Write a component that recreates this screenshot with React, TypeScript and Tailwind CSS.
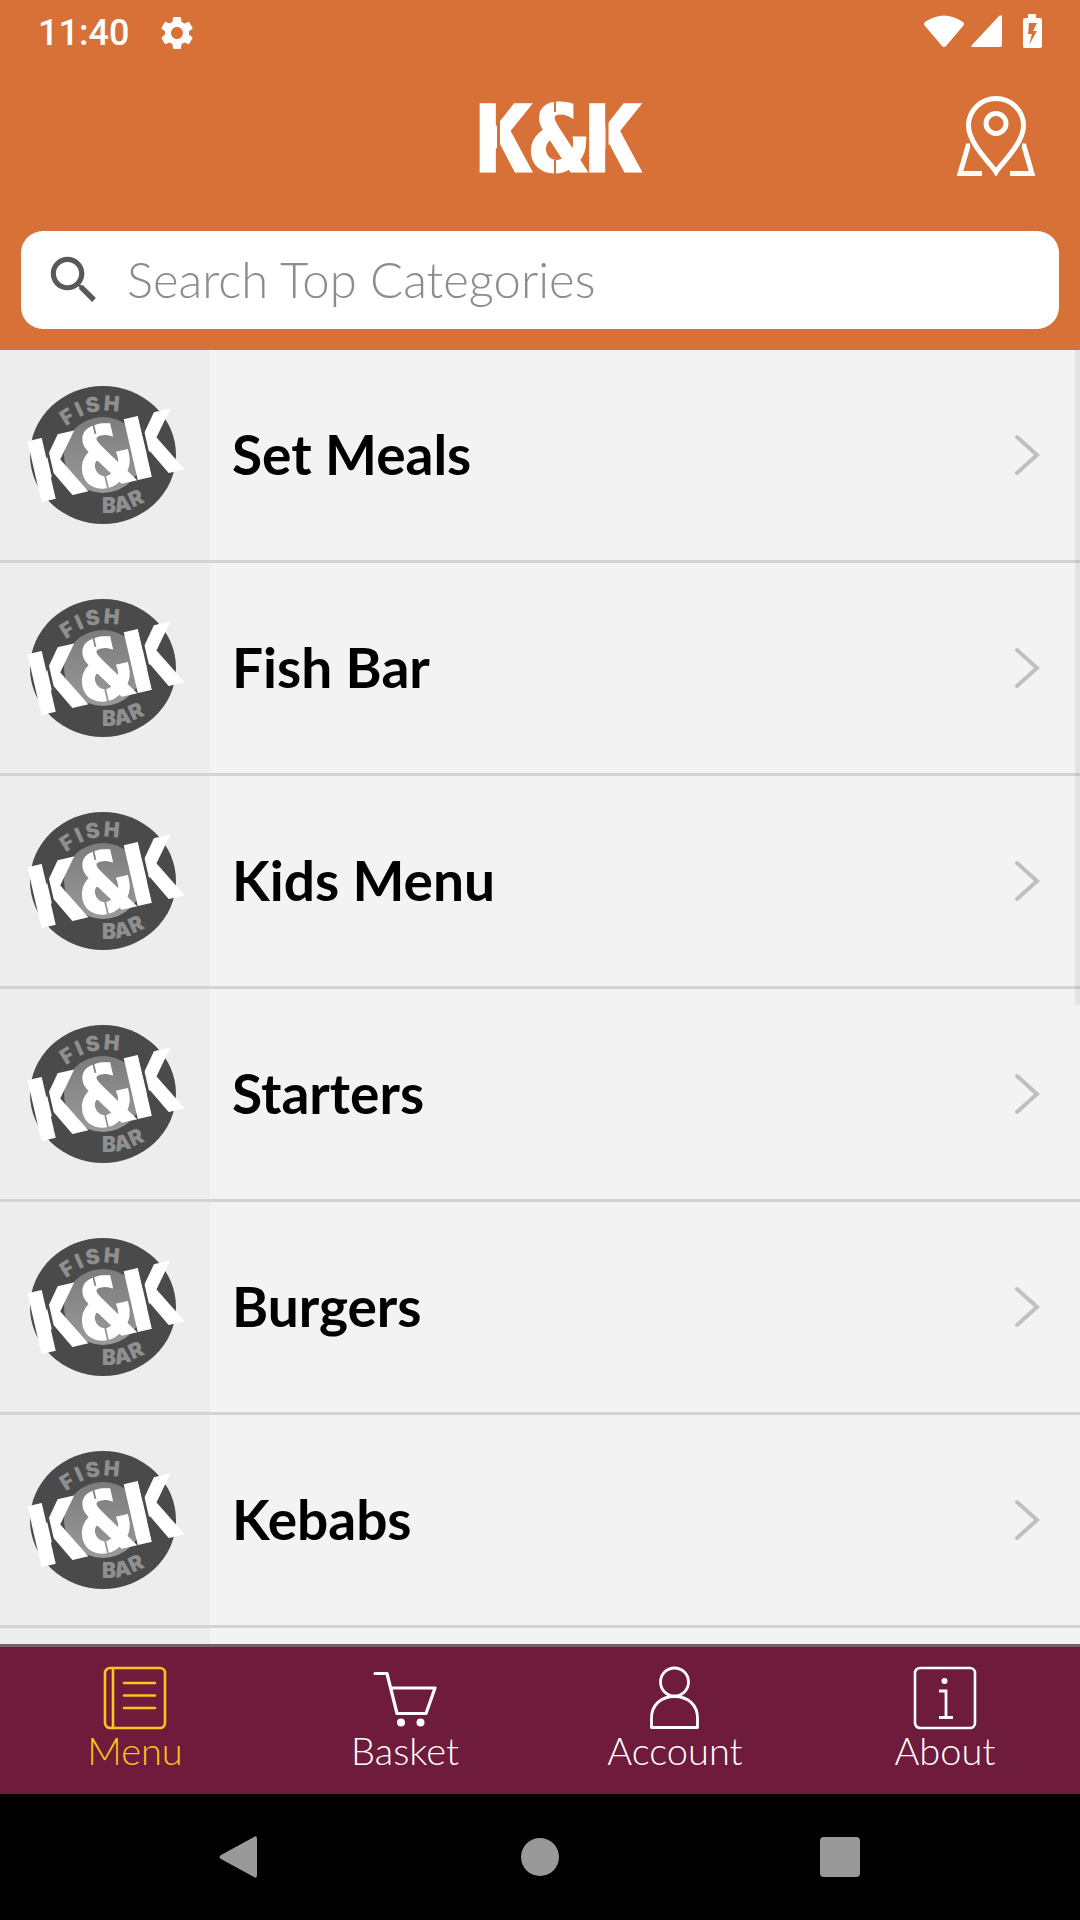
import {useState} from 'react';
import {MdSearch, MdSettings} from 'react-icons/md';

const categories = [
  'Set Meals',
  'Fish Bar',
  'Kids Menu',
  'Starters',
  'Burgers',
  'Kebabs',
];

const tabs = [
  {name: 'Menu', icon: IconMenu},
  {name: 'Basket', icon: IconBasket},
  {name: 'Account', icon: IconAccount},
  {name: 'About', icon: IconAbout},
];

// stencil lettering, the mask cuts the gaps in the letters
function Wordmark({id}: {id: string}) {
  return (
    <g>
      <mask id={id} maskUnits="userSpaceOnUse" x="-10" y="-10" width="190" height="100">
        <rect x="-10" y="-10" width="190" height="100" fill="#fff" />
        <path d="M19.500 -4V80M128 -4V80" stroke="#000" strokeWidth="3" />
        <path d="M76 -4V12M76 60V80" stroke="#000" strokeWidth="2" />
      </mask>
      <g
        mask={`url(#${id})`}
        className="font-['DejaVu_Sans_Mono',monospace] font-bold"
        fill="#fff"
        stroke="#fff"
        strokeWidth="3"
        fontSize="91"
      >
        <text x="-3" y="71">K&amp;K</text>
      </g>
    </g>
  );
}

function CategoryLogo({id}: {id: string}) {
  return (
    <svg viewBox="0 0 210 210" className="w-full" role="img" aria-label="K&K Fish Bar">
      <defs>
        <linearGradient id={`${id}-disc`} x1="0" y1="0" x2="0" y2="1">
          <stop offset="0" stopColor="#7c7c7c" />
          <stop offset="1" stopColor="#9a9a9a" />
        </linearGradient>
      </defs>
      <ellipse cx="103" cy="105" rx="73" ry="69" fill="#4a4a4a" />
      <ellipse cx="103" cy="105" rx="39" ry="38" fill={`url(#${id}-disc)`} />
      <g
        className="font-[Inter,sans-serif] font-black"
        fill="#8f8f8f"
        fontSize="21"
        textAnchor="middle"
      >
        <text transform="translate(71 73) rotate(-32)">F</text>
        <text transform="translate(82 66) rotate(-24)">I</text>
        <text transform="translate(94 62) rotate(-10)">S</text>
        <text transform="translate(111 61) rotate(5)">H</text>
        <text transform="translate(109 163) rotate(0)">B</text>
        <text transform="translate(124 161) rotate(-12)">A</text>
        <text transform="translate(139 155) rotate(-24)">R</text>
      </g>
      <g transform="translate(104 105) rotate(-13) scale(0.9) translate(-80 -37)">
        <Wordmark id={`${id}-cuts`} />
      </g>
    </svg>
  );
}

function IconMap() {
  return (
    <svg viewBox="0 0 80 80" className="size-20" fill="none" stroke="#fff" strokeWidth="5">
      <path d="M40 76C36 69 12.500 48 12.500 29.500A27.500 27 0 0 1 67.500 29.500C67.500 48 44 69 40 76Z" />
      <circle cx="40" cy="27.500" r="10" />
      <path d="M14 50H12L4 77.500H26M66 50H68L76 77.500H54" />
    </svg>
  );
}

function IconMenu() {
  return (
    <svg viewBox="0 0 64 64" className="size-16" fill="none" stroke="currentColor" strokeWidth="2.600" strokeLinecap="round">
      <rect x="2" y="2" width="60" height="60" rx="5" />
      <path d="M10 2V62M21 17H52M21 29.500H52M21 42H52" />
    </svg>
  );
}

function IconBasket() {
  return (
    <svg viewBox="0 0 64 64" className="size-16" fill="none" stroke="currentColor" strokeWidth="3.200" strokeLinecap="round" strokeLinejoin="round">
      <path d="M2 7.500H14L24 47.500H53L62 22H18" />
      <circle cx="28" cy="56.500" r="4" fill="currentColor" stroke="none" />
      <circle cx="47.500" cy="56.500" r="4" fill="currentColor" stroke="none" />
    </svg>
  );
}

function IconAccount() {
  return (
    <svg viewBox="0 0 64 64" className="size-16" fill="none" stroke="currentColor" strokeWidth="2.800" strokeLinejoin="round">
      <circle cx="31.500" cy="16" r="14" />
      <path d="M8.500 61.500V52C8.500 39 18 30.500 31.500 30.500S54.500 39 54.500 52V61.500Z" />
    </svg>
  );
}

function IconAbout() {
  return (
    <svg viewBox="0 0 64 64" className="size-16" fill="none" stroke="currentColor" strokeWidth="2.600">
      <rect x="2" y="2" width="60" height="60" rx="5" />
      <circle cx="31.500" cy="15" r="3" fill="currentColor" stroke="none" />
      <path d="M26 25H33V51M26 51.500H40" strokeWidth="2.800" />
    </svg>
  );
}

function StatusBar() {
  return (
    <div className="flex h-16 items-center justify-between pr-9 pl-[38px] text-white">
      <div className="flex items-center gap-7 pt-px">
        <span className="font-[Roboto,sans-serif] text-[36px] leading-none font-medium">
          11:40
        </span>
        <MdSettings className="size-10" />
      </div>
      <svg viewBox="0 0 122 36" className="h-9" fill="#fff">
        <path d="M3 8Q22 -5 41 8Q43 10 41 12L24 32Q22 34 20 32L3 12Q1 10 3 8Z" />
        <path d="M80 3V31Q80 33 78 33H51Q48 33 50 31L77 2Q80 0 80 3Z" />
        <path
          fillRule="evenodd"
          d="M106 0H114V4H118Q120 4 120 6V32Q120 34 118 34H102Q101 34 101 32V6Q101 4 103 4H106ZM107 9L106 20H110L107 31L115 17H111L115 9Z"
        />
      </svg>
    </div>
  );
}

export default function App() {
  const [activeTab, setActiveTab] = useState('Menu');
  const [search, setSearch] = useState('');

  return (
    <div className="flex h-screen flex-col bg-[#f3f3f3] font-[Lato,sans-serif]">
      <header className="bg-[#d87137]">
        <StatusBar />
        <div className="grid grid-cols-3 items-center px-11 pt-8 pb-[55px]">
          <h1 className="col-start-2 justify-self-center pl-10">
            <svg viewBox="0 0 164 78" className="h-[78px] overflow-visible" role="img" aria-label="K&K">
              <g transform="translate(1 3)">
                <Wordmark id="header-cuts" />
              </g>
            </svg>
          </h1>
          <button type="button" aria-label="Find us" className="justify-self-end">
            <IconMap />
          </button>
        </div>
        <div className="px-[21px] pb-[21px]">
          <label className="flex h-[98px] items-center gap-[22px] rounded-[22px] bg-white pl-[22px]">
            <MdSearch className="size-[62px] text-[#595959]" />
            <input
              type="text"
              aria-label="Search Top Categories"
              placeholder="Search Top Categories"
              value={search}
              onChange={(e) => setSearch(e.target.value)}
              className="min-w-0 flex-1 text-[49px] font-light outline-none placeholder:text-[#8c8c8c]"
            />
          </label>
        </div>
      </header>

      <main className="relative min-h-0 flex-1 overflow-hidden">
        <ul>
          {categories.map((category, index) => (
            <li key={category} className="border-b-[3px] border-[#d3d3d3]">
              <a href="#" className="flex items-center pr-10">
                <span className="w-[210px] shrink-0 bg-[#ededed]">
                  <CategoryLogo id={`logo-${index}`} />
                </span>
                <span className="flex-1 pb-0.5 pl-[22px] text-[55px] leading-none font-bold text-black">
                  {category}
                </span>
                <svg viewBox="0 0 26 42" className="h-[42px]" fill="none" stroke="#c0c0c0" strokeWidth="4" strokeLinecap="round">
                  <path d="M3 3L23 21L3 39" />
                </svg>
              </a>
            </li>
          ))}
          <li className="h-[210px]">
            <div className="h-full w-[210px] bg-[#ededed]" />
          </li>
        </ul>
        <div className="absolute top-0 right-0 h-[655px] w-[5px] bg-black/6" />
      </main>

      <nav className="grid grid-cols-4 border-t-[3px] border-[#7a6068] bg-[#6f1b3b] pt-[19px] pb-6">
        {tabs.map(({name, icon: Icon}) => (
          <button
            key={name}
            type="button"
            onClick={() => setActiveTab(name)}
            className={`flex flex-col items-center ${
              activeTab === name ? 'text-[#fcc31e]' : 'text-white'
            }`}
          >
            <Icon />
            <span className="text-[38px] leading-10 font-light">{name}</span>
          </button>
        ))}
      </nav>

      <div className="bg-black">
        <div className="mx-auto grid h-[126px] w-5/6 grid-cols-3 place-items-center">
          <button type="button" aria-label="Back">
            <svg viewBox="0 0 42 42" className="size-[42px]" fill="#999">
              <path d="M2 19L35 1Q38 -1 38 3V39Q38 43 35 41L2 23Q-1 21 2 19Z" />
            </svg>
          </button>
          <button type="button" aria-label="Home" className="size-[38px] rounded-full bg-[#999999]" />
          <button type="button" aria-label="Recent apps" className="size-10 rounded bg-[#999999]" />
        </div>
      </div>
    </div>
  );
}
